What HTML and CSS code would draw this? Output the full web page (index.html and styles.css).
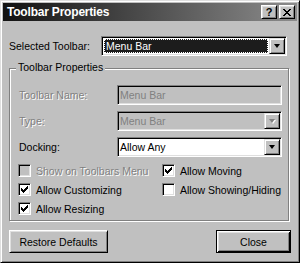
FILE: index.html
```html
<!DOCTYPE html>
<html lang="en">
<head>
    <meta charset="UTF-8">
    <title>Toolbar Properties</title>
    <link rel="stylesheet" href="styles.css">
</head>
<body>
    <div class="window">
        <div class="titlebar">
            <span class="title">Toolbar Properties</span>
            <div class="title-buttons">
                <span class="tb-btn help">?</span>
                <span class="tb-btn close">
                    <svg width="8" height="7" viewBox="0 0 8 7" shape-rendering="crispEdges"><path d="M0 0h2v1H0z M6 0h2v1H6z M1 1h2v1H1z M5 1h2v1H5z M2 2h4v1H2z M3 3h2v1H3z M2 4h4v1H2z M1 5h2v1H1z M5 5h2v1H5z M0 6h2v1H0z M6 6h2v1H6z" fill="#000"/></svg>
                </span>
            </div>
        </div>

        <div class="content">
            <div class="selected-row">
                <span class="label">Selected Toolbar:</span>
                <div class="field combo wide">
                    <span class="value focused">Menu Bar</span>
                    <span class="arrow-btn"><span class="arrow"></span></span>
                </div>
            </div>

            <div class="group">
                <span class="group-label">Toolbar Properties</span>

                <div class="form">
                    <span class="label disabled">Toolbar Name:</span>
                    <div class="field text disabled-field"><span class="value">Menu Bar</span></div>

                    <span class="label disabled">Type:</span>
                    <div class="field combo disabled-field">
                        <span class="value">Menu Bar</span>
                        <span class="arrow-btn"><span class="arrow"></span></span>
                    </div>

                    <span class="label">Docking:</span>
                    <div class="field combo">
                        <span class="value">Allow Any</span>
                        <span class="arrow-btn"><span class="arrow"></span></span>
                    </div>
                </div>

                <div class="checks">
                    <div class="check disabled">
                        <span class="box"></span>
                        <span>Show on Toolbars Menu</span>
                    </div>
                    <div class="check">
                        <span class="box"><svg width="7" height="7" viewBox="0 0 7 7" shape-rendering="crispEdges"><path d="M0 2H1V3H2V4H3V3H4V2H5V1H6V0H7V3H6V4H5V5H4V6H3V7H2V6H1V5H0Z"/></svg></span>
                        <span>Allow Moving</span>
                    </div>
                    <div class="check">
                        <span class="box"><svg width="7" height="7" viewBox="0 0 7 7" shape-rendering="crispEdges"><path d="M0 2H1V3H2V4H3V3H4V2H5V1H6V0H7V3H6V4H5V5H4V6H3V7H2V6H1V5H0Z"/></svg></span>
                        <span>Allow Customizing</span>
                    </div>
                    <div class="check">
                        <span class="box"></span>
                        <span>Allow Showing/Hiding</span>
                    </div>
                    <div class="check">
                        <span class="box"><svg width="7" height="7" viewBox="0 0 7 7" shape-rendering="crispEdges"><path d="M0 2H1V3H2V4H3V3H4V2H5V1H6V0H7V3H6V4H5V5H4V6H3V7H2V6H1V5H0Z"/></svg></span>
                        <span>Allow Resizing</span>
                    </div>
                </div>
            </div>

            <div class="footer">
                <button class="btn restore">Restore Defaults</button>
                <button class="btn default">Close</button>
            </div>
        </div>
    </div>
</body>
</html>
```

FILE: styles.css
```css
body {
    margin: 0;
    background: #c0c0c0;
    font-family: 'Liberation Sans', Arial, sans-serif;
    font-size: 10.5px;
    color: #000;
}

.window {
    box-sizing: border-box;
    width: 300px;
    height: 263px;
    padding: 2px;
    background: #c0c0c0;
    border: 1px solid;
    border-color: #dfdfdf #000 #000 #dfdfdf;
    box-shadow: inset 1px 1px #fff, inset -1px -1px #808080;
}

/* title bar */
.titlebar {
    height: 18px;
    display: flex;
    align-items: center;
    justify-content: space-between;
    padding: 0 2px 0 4px;
    background: linear-gradient(to right, #121212, #8c8c8c);
}

.title {
    color: #fff;
    font-weight: bold;
    font-size: 12px;
    letter-spacing: -0.2px;
}

.title-buttons {
    display: flex;
    gap: 2px;
}

.tb-btn {
    box-sizing: border-box;
    width: 16px;
    height: 14px;
    display: flex;
    align-items: center;
    justify-content: center;
    background: #c0c0c0;
    border: 1px solid;
    border-color: #fff #000 #000 #fff;
    box-shadow: inset 1px 1px #dfdfdf, inset -1px -1px #808080;
    font-weight: bold;
    font-size: 11px;
    line-height: 1;
}

/* content */
.content {
    padding: 0 6px;
}

.selected-row {
    margin-top: 15px;
    display: flex;
    align-items: center;
    justify-content: space-between;
    width: 278px;
}

.field {
    box-sizing: border-box;
    height: 20px;
    padding: 1px;
    display: flex;
    background: #fff;
    border: 1px solid;
    border-color: #808080 #fff #fff #808080;
    box-shadow: inset 1px 1px #000, inset -1px -1px #dfdfdf;
}

.field .value {
    flex: 1;
    display: flex;
    align-items: center;
    padding-left: 1px;
    white-space: nowrap;
}

.field.wide {
    width: 186px;
}

.value.focused {
    margin: 1px;
    padding-left: 2px;
    background: #1c1c1c;
    color: #fff;
    outline: 1px dotted #fff;
    outline-offset: -1px;
}

.disabled-field {
    background: #c0c0c0;
    color: #808080;
}

.arrow-btn {
    box-sizing: border-box;
    width: 16px;
    height: 16px;
    display: flex;
    align-items: center;
    justify-content: center;
    background: #c0c0c0;
    border: 1px solid;
    border-color: #dfdfdf #000 #000 #dfdfdf;
    box-shadow: inset 1px 1px #fff, inset -1px -1px #808080;
}

.arrow {
    width: 0;
    height: 0;
    border-left: 3.5px solid transparent;
    border-right: 3.5px solid transparent;
    border-top: 4px solid #000;
}

.disabled-field .arrow {
    border-top-color: #808080;
    filter: drop-shadow(1px 1px 0 #fff);
}

.label.disabled,
.check.disabled {
    color: #808080;
    text-shadow: 1px 1px 0 #fff;
}

/* group box */
.group {
    position: relative;
    box-sizing: border-box;
    width: 280px;
    height: 153px;
    margin-top: 12px;
    padding: 16px 6px 0 9px;
    border: 1px solid #808080;
    box-shadow: inset 1px 1px #fff, 1px 1px 0 #fff;
}

.group-label {
    position: absolute;
    top: -8px;
    left: 6px;
    padding: 0 2px;
    line-height: 13px;
    background: #c0c0c0;
}

.form {
    display: grid;
    grid-template-columns: 98px 165px;
    grid-auto-rows: 20px;
    row-gap: 6px;
    align-items: center;
}

.checks {
    margin: 7px 0 0 -1px;
    display: grid;
    grid-template-columns: 144px 1fr;
    grid-auto-rows: 13px;
    row-gap: 6px;
}

.check {
    display: flex;
    align-items: center;
    gap: 5px;
    white-space: nowrap;
}

.box {
    box-sizing: border-box;
    width: 13px;
    height: 13px;
    padding: 2px;
    background: #fff;
    border: 1px solid;
    border-color: #808080 #fff #fff #808080;
    box-shadow: inset 1px 1px #000, inset -1px -1px #dfdfdf;
    flex: none;
}

.box svg {
    display: block;
}

.check.disabled .box {
    background: #c0c0c0;
}

/* footer buttons */
.footer {
    margin-top: 9px;
    width: 282px;
    display: flex;
    justify-content: space-between;
}

.btn {
    box-sizing: border-box;
    height: 23px;
    padding: 0;
    background: #c0c0c0;
    font-family: inherit;
    font-size: 10.5px;
    color: #000;
    border: 1px solid;
    border-color: #fff #000 #000 #fff;
    box-shadow: inset 1px 1px #dfdfdf, inset -1px -1px #808080;
}

.btn.restore {
    width: 99px;
}

.btn.default {
    width: 75px;
    border-color: #000;
    box-shadow: inset 1px 1px #fff, inset -1px -1px #000, inset 2px 2px #dfdfdf, inset -2px -2px #808080;
}
```
